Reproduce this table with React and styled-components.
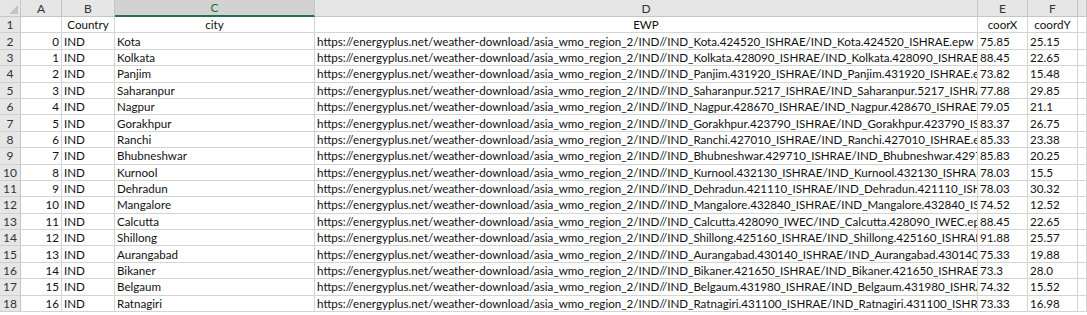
import React from "react";
import styled, { createGlobalStyle } from "styled-components";

const GlobalStyle = createGlobalStyle`
	html, body {
		margin: 0;
		padding: 0;
		background: #ffffff;
	}
	body {
		font-family: Lato, "Open Sans", sans-serif;
		overflow: hidden;
	}
`;

const BASE = "https://energyplus.net/weather-download/asia_wmo_region_2/IND//";

const rows = [
	["Kota", "424520_ISHRAE", "75.85", "25.15"],
	["Kolkata", "428090_ISHRAE", "88.45", "22.65"],
	["Panjim", "431920_ISHRAE", "73.82", "15.48"],
	["Saharanpur", "5217_ISHRAE", "77.88", "29.85"],
	["Nagpur", "428670_ISHRAE", "79.05", "21.1"],
	["Gorakhpur", "423790_ISHRAE", "83.37", "26.75"],
	["Ranchi", "427010_ISHRAE", "85.33", "23.38"],
	["Bhubneshwar", "429710_ISHRAE", "85.83", "20.25"],
	["Kurnool", "432130_ISHRAE", "78.03", "15.5"],
	["Dehradun", "421110_ISHRAE", "78.03", "30.32"],
	["Mangalore", "432840_ISHRAE", "74.52", "12.52"],
	["Calcutta", "428090_IWEC", "88.45", "22.65"],
	["Shillong", "425160_ISHRAE", "91.88", "25.57"],
	["Aurangabad", "430140_ISHRAE", "75.33", "19.88"],
	["Bikaner", "421650_ISHRAE", "73.3", "28.0"],
	["Belgaum", "431980_ISHRAE", "74.32", "15.52"],
	["Ratnagiri", "431100_ISHRAE", "73.33", "16.98"],
];

const columns = ["A", "B", "C", "D", "E", "F", ""];

const Sheet = styled.div`
	display: grid;
	grid-template-columns: 21px 41px 53px 200px 663px 50px 50px 1fr;
	grid-template-rows: 17px repeat(18, 16.4px);
	width: 1087px;
	font-size: 11.6px;
	color: #111;
`;

const Corner = styled.div`
	position: relative;
	background: #e6e6e6;
	border-right: 1px solid #c6c6c6;
	border-bottom: 1px solid #c6c6c6;

	&::after {
		content: "";
		position: absolute;
		right: 2px;
		bottom: 2px;
		border-left: 9px solid transparent;
		border-bottom: 9px solid #c3c3c3;
	}
`;

const ColHead = styled.div`
	display: flex;
	align-items: center;
	justify-content: center;
	background: ${(p) => (p.$active ? "#d2d2d2" : "#e6e6e6")};
	color: ${(p) => (p.$active ? "#1e6e42" : "#333")};
	border-right: 1px solid #c6c6c6;
	border-bottom: ${(p) => (p.$active ? "2px solid #217346" : "1px solid #c6c6c6")};
	box-sizing: border-box;
	font-size: 12px;
`;

const RowHead = styled.div`
	display: flex;
	align-items: center;
	justify-content: center;
	background: #e6e6e6;
	color: #333;
	border-right: 1px solid #c6c6c6;
	border-bottom: 1px solid #d0d0d0;
	box-sizing: border-box;
	font-size: 12px;
`;

const Cell = styled.div`
	display: flex;
	align-items: center;
	justify-content: ${(p) =>
		p.$align === "right" ? "flex-end" : p.$align === "center" ? "center" : "flex-start"};
	padding: 0 2px;
	border-right: 1px solid #d4d4d4;
	border-bottom: 1px solid #d4d4d4;
	box-sizing: border-box;
	white-space: nowrap;
	overflow: hidden;
	min-width: 0;
`;

const App = () => {
	return (
		<>
			<GlobalStyle />
			<Sheet>
				<Corner />
				{columns.map((c, i) => (
					<ColHead key={i} $active={c === "C"}>
						{c}
					</ColHead>
				))}

				<RowHead>1</RowHead>
				<Cell />
				<Cell $align="center">Country</Cell>
				<Cell $align="center">city</Cell>
				<Cell $align="center">EWP</Cell>
				<Cell $align="center">coorX</Cell>
				<Cell $align="center">coordY</Cell>
				<Cell />

				{rows.map(([city, code, x, y], i) => {
					const file = `IND_${city}.${code}`;
					return (
						<React.Fragment key={city + i}>
							<RowHead>{i + 2}</RowHead>
							<Cell $align="right">{i}</Cell>
							<Cell>IND</Cell>
							<Cell>{city}</Cell>
							<Cell>{`${BASE}${file}/${file}.epw`}</Cell>
							<Cell>{x}</Cell>
							<Cell>{y}</Cell>
							<Cell />
						</React.Fragment>
					);
				})}
			</Sheet>
		</>
	);
};

export default App;
